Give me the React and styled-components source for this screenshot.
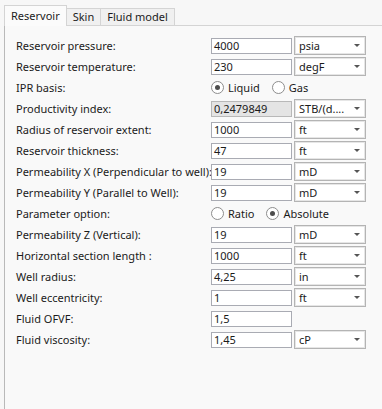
import React from 'react';
import styled, { createGlobalStyle } from 'styled-components';

const GlobalStyle = createGlobalStyle`
  html, body {
    margin: 0;
    padding: 0;
    background: #f7f7f7;
  }
  body {
    font-family: 'Noto Sans', 'Open Sans', sans-serif;
    font-size: 11px;
    color: #1b1b1b;
  }
`;

const Page = styled.div`
  width: 382px;
  height: 409px;
  padding: 5px 0 0 4px;
  box-sizing: border-box;
  display: flex;
  flex-direction: column;
  overflow: hidden;
`;

const TabBar = styled.div`
  display: flex;
  align-items: flex-end;
  height: 20px;
  position: relative;
  z-index: 1;
`;

const Tab = styled.div`
  box-sizing: border-box;
  height: ${(p) => (p.$active ? '21px' : '17px')};
  margin-bottom: ${(p) => (p.$active ? '-1px' : '0')};
  padding: ${(p) => (p.$active ? '2px 6px 0 6px' : '0 6px')};
  border: 1px solid #d4d4d4;
  border-bottom: none;
  border-left: ${(p) => (p.$first ? '1px solid #d4d4d4' : 'none')};
  background: ${(p) => (p.$active ? '#fbfbfb' : '#f0f0f0')};
  line-height: 15px;
  white-space: nowrap;
`;

const Panel = styled.div`
  flex: 1;
  border-top: 1px solid #d4d4d4;
  border-left: 1px solid #b9b9b9;
  background: #f9f9f9;
  padding: 9px 0 0 11px;
`;

const Form = styled.div`
  display: grid;
  grid-template-columns: 193px 81px 72px;
  grid-auto-rows: 21px;
  column-gap: 2px;
  align-items: center;
`;

const Label = styled.div`
  grid-column: 1;
  white-space: nowrap;
`;

const Field = styled.div`
  grid-column: 2;
  box-sizing: border-box;
  height: 16px;
  border: 1px solid ${(p) => (p.$disabled ? '#b8b8b8' : '#a9abb3')};
  background: ${(p) => (p.$disabled ? '#e4e4e4' : '#fff')};
  padding: 0 2px;
  line-height: 14px;
`;

const Select = styled.div`
  grid-column: 3;
  box-sizing: border-box;
  height: 19px;
  border: 1px solid #b4b4b4;
  box-shadow: inset 0 0 0 1px #e6e6e6;
  background: #fff;
  padding: 0 0 0 4px;
  display: flex;
  align-items: center;
  justify-content: space-between;
  line-height: 17px;
`;

const Arrow = styled.span`
  width: 0;
  height: 0;
  margin-right: 5px;
  border-left: 3px solid transparent;
  border-right: 3px solid transparent;
  border-top: 3px solid #555;
`;

const RadioGroup = styled.div`
  grid-column: 2 / 4;
  display: flex;
  align-items: center;
  gap: 12px;
`;

const RadioItem = styled.label`
  display: flex;
  align-items: center;
  gap: 4px;
`;

const RadioDot = styled.span`
  box-sizing: border-box;
  width: 13px;
  height: 13px;
  border-radius: 50%;
  border: 1px solid #8d8d8d;
  background: #fff;
  display: flex;
  align-items: center;
  justify-content: center;
  &::after {
    content: '';
    width: 5px;
    height: 5px;
    border-radius: 50%;
    background: ${(p) => (p.$checked ? '#4d4d4d' : 'transparent')};
  }
`;

const rows = [
  { label: 'Reservoir pressure:', value: '4000', unit: 'psia' },
  { label: 'Reservoir temperature:', value: '230', unit: 'degF' },
  { label: 'IPR basis:', radios: ['Liquid', 'Gas'], checked: 0 },
  { label: 'Productivity index:', value: '0,2479849', unit: 'STB/(d....', disabled: true },
  { label: 'Radius of reservoir extent:', value: '1000', unit: 'ft' },
  { label: 'Reservoir thickness:', value: '47', unit: 'ft' },
  { label: 'Permeability X (Perpendicular to well):', value: '19', unit: 'mD' },
  { label: 'Permeability Y (Parallel to Well):', value: '19', unit: 'mD' },
  { label: 'Parameter option:', radios: ['Ratio', 'Absolute'], checked: 1 },
  { label: 'Permeability Z (Vertical):', value: '19', unit: 'mD' },
  { label: 'Horizontal section length :', value: '1000', unit: 'ft' },
  { label: 'Well radius:', value: '4,25', unit: 'in' },
  { label: 'Well eccentricity:', value: '1', unit: 'ft' },
  { label: 'Fluid OFVF:', value: '1,5' },
  { label: 'Fluid viscosity:', value: '1,45', unit: 'cP' },
];

export default function App() {
  return (
    <>
      <GlobalStyle />
      <Page>
        <TabBar>
          <Tab $active $first>Reservoir</Tab>
          <Tab>Skin</Tab>
          <Tab>Fluid model</Tab>
        </TabBar>
        <Panel>
          <Form>
            {rows.map((row) => (
              <React.Fragment key={row.label}>
                <Label>{row.label}</Label>
                {row.radios ? (
                  <RadioGroup>
                    {row.radios.map((r, i) => (
                      <RadioItem key={r}>
                        <RadioDot $checked={i === row.checked} />
                        {r}
                      </RadioItem>
                    ))}
                  </RadioGroup>
                ) : (
                  <>
                    <Field $disabled={row.disabled}>{row.value}</Field>
                    {row.unit && (
                      <Select>
                        {row.unit}
                        <Arrow />
                      </Select>
                    )}
                  </>
                )}
              </React.Fragment>
            ))}
          </Form>
        </Panel>
      </Page>
    </>
  );
}
